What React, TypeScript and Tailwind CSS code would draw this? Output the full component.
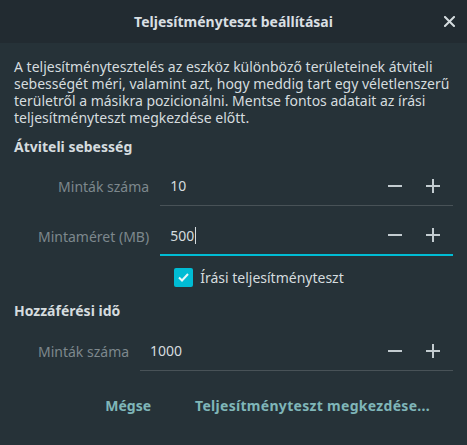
import React, { useState } from 'react';

const SpinRow: React.FC<{ label: string; value: string; focused?: boolean }> = ({ label, value, focused }) => {
  const [val, setVal] = useState(value);
  const step = (d: number) => setVal(String(Math.max(0, (parseInt(val, 10) || 0) + d)));
  return (
    <>
      <div className="text-right text-[#7d888d] pr-[11px] h-[40px] flex items-center justify-end">{label}</div>
      <div className={focused ? 'flex items-center h-[40px] border-b-2 border-[#00bcd4]' : 'flex items-center h-[40px] border-b border-[#485257]'}>
        <div className="flex-1 pl-[10px] text-[#d5dcdf] flex items-center">
          {val}
          {focused && <span className="inline-block w-px h-[17px] bg-[#d5dcdf] ml-px" />}
        </div>
        <button onClick={() => step(-1)} className="w-[38px] h-full flex items-center justify-center">
          <span className="block w-[14px] h-[2px] bg-[#c3ccd0]" />
        </button>
        <button onClick={() => step(1)} className="w-[38px] h-full flex items-center justify-center mr-[1px]">
          <span className="relative block w-[14px] h-[14px]">
            <span className="absolute left-0 top-[6px] w-[14px] h-[2px] bg-[#c3ccd0]" />
            <span className="absolute top-0 left-[6px] w-[2px] h-[14px] bg-[#c3ccd0]" />
          </span>
        </button>
      </div>
    </>
  );
};

export default function App() {
  const [write, setWrite] = useState(true);

  return (
    <div className="w-[467px] h-[445px] bg-[#263238] text-[14px] text-[#d5dcdf] font-['Noto_Sans',sans-serif] flex flex-col overflow-hidden">
      <header className="h-[43px] bg-[#222b31] flex items-center justify-center relative shrink-0">
        <h1 className="font-bold text-[#d9dfe2]">Teljesítményteszt beállításai</h1>
        <button className="absolute right-[12px] top-[16px] w-[11px] h-[11px]">
          <svg viewBox="0 0 11 11" className="w-[11px] h-[11px]">
            <path d="M1 1 L10 10 M10 1 L1 10" stroke="#d5dcdf" strokeWidth="2" strokeLinecap="square" />
          </svg>
        </button>
      </header>

      <div className="px-[14px] pt-[15px]">
        <p className="leading-[17px] whitespace-nowrap">
          A teljesítménytesztelés az eszköz különböző területeinek átviteli<br />
          sebességét méri, valamint azt, hogy meddig tart egy véletlenszerű<br />
          területről a másikra pozicionálni. Mentse fontos adatait az írási<br />
          teljesítményteszt megkezdése előtt.
        </p>

        <h2 className="font-bold mt-[12px] leading-[17px]">Átviteli sebesség</h2>
        <div className="grid grid-cols-[auto_1fr] gap-y-[10px] pl-[24px] mt-[11px]">
          <SpinRow label="Minták száma" value="10" />
          <SpinRow label="Mintaméret (MB)" value="500" focused />
          <div />
          <label className="flex items-center gap-[7px] mt-[1px] ml-[14px] cursor-pointer">
            <button
              onClick={() => setWrite(!write)}
              className={write ? 'w-[19px] h-[19px] rounded-[2px] bg-[#00bcd4] flex items-center justify-center' : 'w-[19px] h-[19px] rounded-[2px] border-2 border-[#7d888d]'}
            >
              {write && (
                <svg viewBox="0 0 19 19" className="w-[19px] h-[19px]">
                  <path d="M5 9.5 L8 12.5 L14 6" stroke="#e6f6f8" strokeWidth="2" fill="none" />
                </svg>
              )}
            </button>
            <span>Írási teljesítményteszt</span>
          </label>
        </div>

        <h2 className="font-bold mt-[14px] leading-[17px]">Hozzáférési idő</h2>
        <div className="grid grid-cols-[auto_1fr] pl-[24px] mt-[12px]">
          <SpinRow label="Minták száma" value="1000" />
        </div>

        <div className="flex justify-end gap-[44px] font-bold text-[#7fb6b8] pr-[23px] mt-[24px]">
          <button>Mégse</button>
          <button className="tracking-[0.3px]">Teljesítményteszt megkezdése...</button>
        </div>
      </div>
    </div>
  );
}
